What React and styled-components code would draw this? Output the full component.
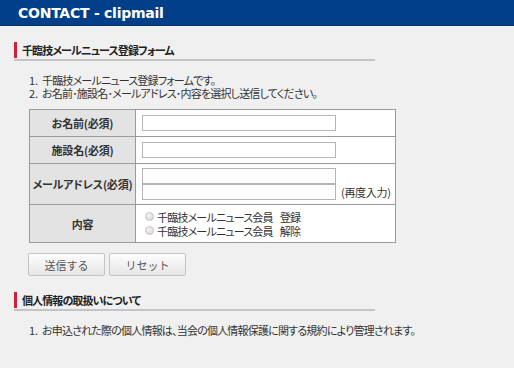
import React from 'react';
import styled, { createGlobalStyle } from 'styled-components';

const GlobalStyle = createGlobalStyle`
  html, body {
    margin: 0;
    padding: 0;
    background: #f0f0f0;
  }
  body {
    font-family: "Noto Sans CJK JP", "Liberation Sans", sans-serif;
    font-size: 11px;
    color: #333;
    font-feature-settings: "palt";
  }
`;

const Header = styled.header`
  height: 25px;
  background: #023f89;
  border-bottom: 1px solid #01306a;
  display: flex;
  align-items: center;
  padding-left: 18px;
  color: #fff;
  font-family: "DejaVu Sans", "Liberation Sans", sans-serif;
  font-weight: bold;
  font-size: 14px;
  letter-spacing: -0.25px;
`;

const Main = styled.main`
  padding: 16px 0 0 14px;
`;

const SectionTitle = styled.h2`
  width: 361px;
  margin: ${p => p.$top || 0}px 0 0;
  padding-bottom: 1px;
  border-bottom: 2px solid #c4c4c4;
  font-size: 11px;
  font-weight: bold;
  color: #222;
  line-height: 16px;
  letter-spacing: -0.9px;

  span {
    display: block;
    border-left: 3px solid #cf1f3d;
    padding-left: 5px;
  }
`;

const NoteList = styled.ol`
  margin: 13px 0 0 15px;
  padding: 0;
  list-style: none;
  line-height: 13px;
  color: #333;
`;

const Note = styled.li`
  display: flex;
  letter-spacing: -0.8px;

  em {
    font-style: normal;
    width: 13px;
    letter-spacing: 0;
  }
`;

const FormTable = styled.table`
  margin: 9px 0 0 15px;
  width: 367px;
  border-collapse: collapse;
  background: #fff;
  border: 1px solid #9a9a9a;
`;

const Row = styled.tr`
  height: ${p => p.$h}px;
`;

const Label = styled.th`
  width: 105px;
  padding: 0;
  background: #e3e3e3;
  border: 1px solid #9a9a9a;
  font-weight: bold;
  color: #333;
  text-align: center;
  vertical-align: middle;
  letter-spacing: -0.2px;
`;

const Value = styled.td`
  padding: 0 0 0 6px;
  border: 1px solid #9a9a9a;
  vertical-align: middle;
`;

const TextInput = styled.input`
  display: block;
  box-sizing: border-box;
  width: 194px;
  height: 16px;
  margin: 0;
  border: 1px solid #b5b5b5;
  background: #fff;
`;

const InputLine = styled.div`
  display: flex;
  align-items: center;
  gap: 5px;
  letter-spacing: -0.3px;
`;

const Radio = styled.label`
  display: flex;
  align-items: center;
  gap: 3px;
  line-height: 14px;
  padding-left: 3px;
  letter-spacing: -0.8px;

  i {
    width: 7px;
    height: 7px;
    border-radius: 50%;
    border: 1px solid #c8c8c8;
    background: radial-gradient(circle at 40% 35%, #f4f4f4, #d2d2d2);
  }

  b {
    font-weight: normal;
    margin-left: 4px;
  }
`;

const Buttons = styled.div`
  display: flex;
  gap: 4px;
  margin: 10px 0 0 14px;
`;

const Button = styled.button`
  width: 77px;
  height: 23px;
  padding: 0;
  border: 1px solid #c4c4c4;
  border-radius: 2px;
  background: linear-gradient(#fdfdfd, #e6e6e6);
  font-family: inherit;
  font-size: 11px;
  color: #555;
`;

export default function App() {
  return (
    <>
      <GlobalStyle />
      <Header>CONTACT - clipmail</Header>
      <Main>
        <SectionTitle><span>千臨技メールニュース登録フォーム</span></SectionTitle>
        <NoteList>
          <Note><em>1.</em>千臨技メールニュース登録フォームです。</Note>
          <Note><em>2.</em>お名前･施設名･メールアドレス･内容を選択し送信してください。</Note>
        </NoteList>
        <FormTable>
          <tbody>
            <Row $h={27}>
              <Label>お名前(必須)</Label>
              <Value><TextInput type="text" /></Value>
            </Row>
            <Row $h={27}>
              <Label>施設名(必須)</Label>
              <Value><TextInput type="text" /></Value>
            </Row>
            <Row $h={41}>
              <Label>メールアドレス(必須)</Label>
              <Value>
                <TextInput type="text" />
                <InputLine>
                  <TextInput type="text" />
                  <span>(再度入力)</span>
                </InputLine>
              </Value>
            </Row>
            <Row $h={38}>
              <Label>内容</Label>
              <Value>
                <Radio><i />千臨技メールニュース会員<b>登録</b></Radio>
                <Radio><i />千臨技メールニュース会員<b>解除</b></Radio>
              </Value>
            </Row>
          </tbody>
        </FormTable>
        <Buttons>
          <Button>送信する</Button>
          <Button>リセット</Button>
        </Buttons>
        <SectionTitle $top={16}><span>個人情報の取扱いについて</span></SectionTitle>
        <NoteList>
          <Note><em>1.</em>お申込された際の個人情報は、当会の個人情報保護に関する規約により管理されます。</Note>
        </NoteList>
      </Main>
    </>
  );
}
